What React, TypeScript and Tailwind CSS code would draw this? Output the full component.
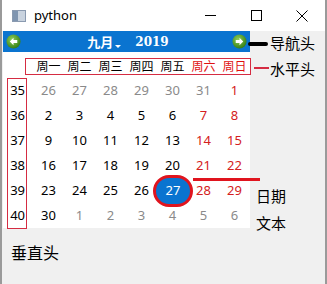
import React from 'react';

const CJK = "font-['Noto_Sans_CJK_SC','Noto_Sans',sans-serif]";
const NUM = "font-['Noto_Sans','Open_Sans',sans-serif]";

const weeks = [
  { no: 35, days: [26, 27, 28, 29, 30, 31, 1] },
  { no: 36, days: [2, 3, 4, 5, 6, 7, 8] },
  { no: 37, days: [9, 10, 11, 12, 13, 14, 15] },
  { no: 38, days: [16, 17, 18, 19, 20, 21, 22] },
  { no: 39, days: [23, 24, 25, 26, 27, 28, 29] },
  { no: 40, days: [30, 1, 2, 3, 4, 5, 6] },
];

const heads = ['周一', '周二', '周三', '周四', '周五', '周六', '周日'];

function NavArrow({ dir }: { dir: 'left' | 'right' }) {
  return (
    <svg width="15" height="15" viewBox="0 0 16 16">
      <defs>
        <radialGradient id={`g-${dir}`} cx="40%" cy="35%" r="70%">
          <stop offset="0%" stopColor="#8fd05a" />
          <stop offset="100%" stopColor="#2f7a12" />
        </radialGradient>
      </defs>
      <circle cx="8" cy="8" r="7.5" fill={`url(#g-${dir})`} />
      {dir === 'left' ? (
        <path d="M4 8 L8 4 L8 6.5 L12 6.5 L12 9.5 L8 9.5 L8 12 Z" fill="#fff" />
      ) : (
        <path d="M12 8 L8 4 L8 6.5 L4 6.5 L4 9.5 L8 9.5 L8 12 Z" fill="#fff" />
      )}
    </svg>
  );
}

function dayColor(week: number, col: number, day: number) {
  const outside = (week === 0 && day > 20) || (week === 5 && day < 10);
  if (week === 0 && col === 6) return 'text-[#d42020]';
  if (outside) return 'text-[#8a8a8a]';
  if (col >= 5) return 'text-[#d42020]';
  return 'text-black';
}

export default function App() {
  return (
    <div className={`relative w-[327px] h-[284px] overflow-hidden bg-[#f0f0f0] border-x-2 border-[#9a9a9a] ${CJK}`}>
      {/* 标题栏 */}
      <div className="h-[31px] bg-white flex items-center">
        <div className="ml-[10px] w-[14px] h-[12px] border border-[#8a9ab0] bg-[#c9d3df] flex">
          <div className="w-[5px] h-full bg-[#7f95b0]" />
        </div>
        <span className="ml-[8px] text-[13px] text-black font-['Segoe_UI','Noto_Sans',sans-serif]">python</span>
        <div className="ml-auto flex items-center">
          <div className="w-[46px] h-[30px] flex items-center justify-center">
            <div className="w-[11px] h-px bg-black" />
          </div>
          <div className="w-[46px] h-[30px] flex items-center justify-center">
            <div className="w-[11px] h-[11px] border border-black" />
          </div>
          <div className="w-[46px] h-[30px] flex items-center justify-center">
            <svg width="12" height="12" viewBox="0 0 12 12">
              <path d="M0.5 0.5 L11.5 11.5 M11.5 0.5 L0.5 11.5" stroke="#000" strokeWidth="1" />
            </svg>
          </div>
        </div>
      </div>

      {/* 日历 */}
      <div className="ml-px w-[247px] bg-white">
        <div className="h-[21px] bg-[#0a74d0] flex items-center px-[3px]">
          <NavArrow dir="left" />
          <div className="flex-1 flex items-center justify-center gap-[5px] text-white font-bold text-[13px] pl-[3px]">
            <span className="flex items-end">
              九月
              <svg width="8" height="8" viewBox="0 0 8 8" className="ml-px mb-[1px]">
                <path d="M1 3 L7 3 L4 6 Z" fill="#fff" />
              </svg>
            </span>
            <span className="ml-[8px] font-['DejaVu_Serif',serif] text-[12px]">2019</span>
          </div>
          <NavArrow dir="right" />
        </div>

        <div className="h-[26px] flex pt-[5px]">
          <div className="w-[30px]" />
          <div className="grid grid-cols-7 w-[217px] h-[17px] items-center">
            {heads.map((h, i) => (
              <div key={h} className={`text-center text-[12px] leading-none ${i >= 5 ? 'text-[#e01010]' : 'text-black'}`}>
                {h}
              </div>
            ))}
          </div>
        </div>

        <div className={`flex ${NUM}`}>
          <div className="w-[30px] flex flex-col">
            {weeks.map((w) => (
              <div key={w.no} className="h-[25px] flex items-center justify-end pr-[8px] text-[13px] text-black">
                {w.no}
              </div>
            ))}
          </div>
          <div className="w-[217px] flex flex-col">
            {weeks.map((w, wi) => (
              <div key={w.no} className="grid grid-cols-7 h-[25px]">
                {w.days.map((d, ci) => (
                  <div key={ci} className={`flex items-center justify-center text-[13px] ${dayColor(wi, ci, d)}`}>
                    {wi === 4 && ci === 4 ? '' : d}
                  </div>
                ))}
              </div>
            ))}
          </div>
        </div>
      </div>

      {/* 标注 */}
      <div className="absolute left-[23px] top-[58px] w-[226px] h-[17px] border border-[#d52c42]" />
      <div className="absolute left-[5px] top-[78px] w-[20px] h-[151px] border border-[#d52c42]" />

      <div className={`absolute left-[151px] top-[175px] w-[40px] h-[32px] rounded-full bg-[#0a74d0] border-[3px] border-[#e0141e] flex items-center justify-center text-white text-[13px] ${NUM}`}>
        27
      </div>
      <div className="absolute left-[191px] top-[178px] w-[67px] h-[3px] bg-[#e0141e]" />

      <div className="absolute left-[246px] top-[42px] w-[20px] h-[4px] rounded-full bg-black" />
      <div className="absolute left-[268px] top-[35px] text-[15px] leading-none text-black">导航头</div>

      <div className="absolute left-[252px] top-[67px] w-[15px] h-[2px] bg-[#d52c42]" />
      <div className="absolute left-[268px] top-[61px] text-[15px] leading-none text-black">水平头</div>

      <div className="absolute left-[254px] top-[188px] text-[15px] leading-none text-black">日期</div>
      <div className="absolute left-[254px] top-[215px] text-[15px] leading-none text-black">文本</div>

      <div className="absolute left-[9px] top-[244px] text-[16px] leading-none text-black">垂直头</div>
    </div>
  );
}
